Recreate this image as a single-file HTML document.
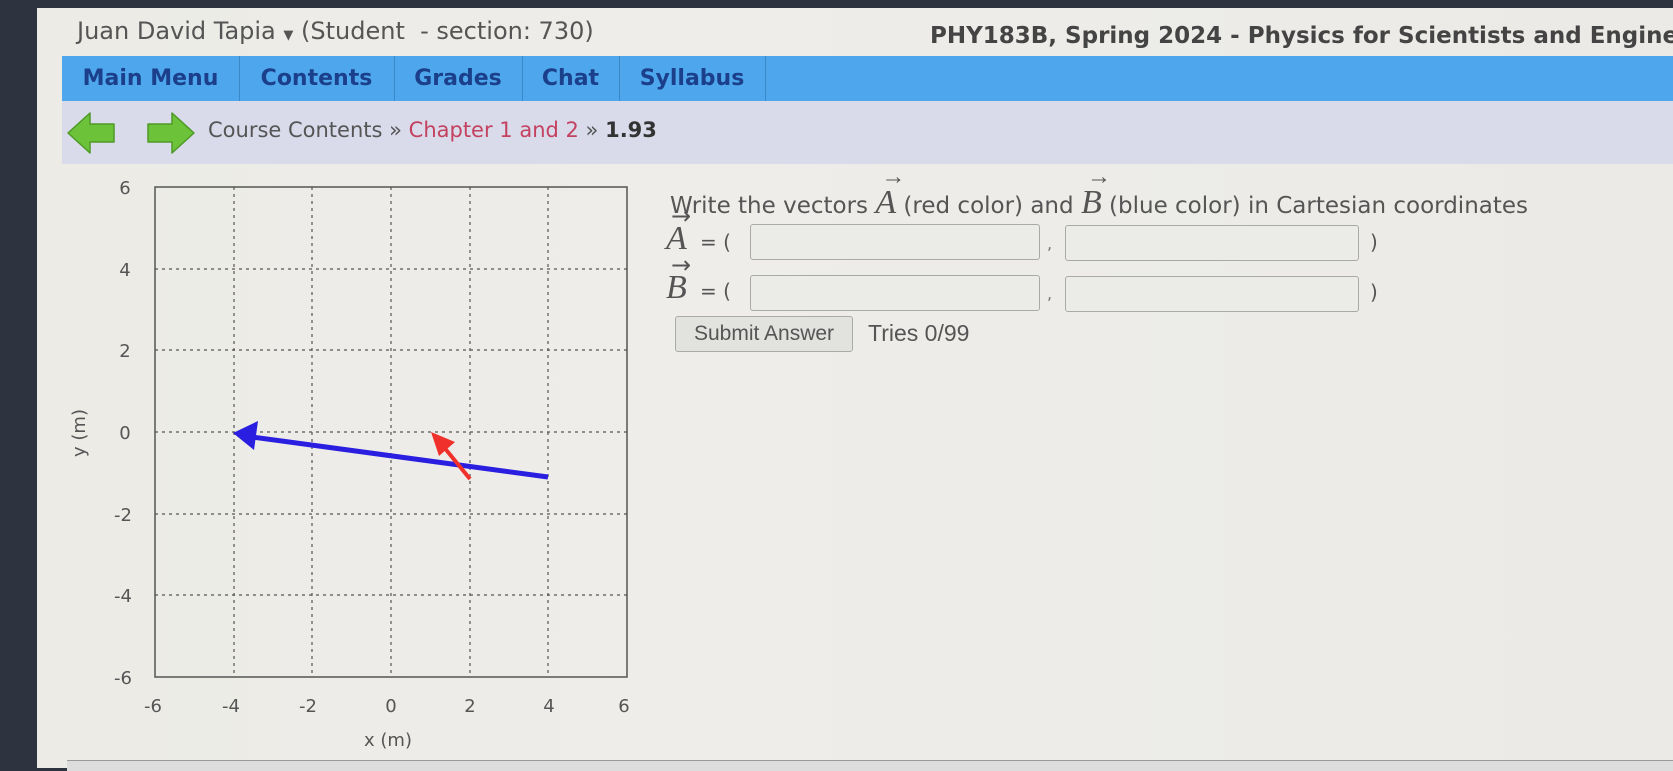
<!DOCTYPE html>
<html><head><meta charset="utf-8"><style>
body{margin:0;width:1673px;height:766px;overflow:hidden;background:#2d3440;font-family:"DejaVu Sans","Liberation Sans",sans-serif;position:relative}
#page{position:absolute;left:37px;top:8px;width:1640px;height:760px;background:linear-gradient(90deg,#ecebe6 0%,#eeedea 40%,#ebeae6 100%)}
.a{position:absolute;white-space:nowrap}
.nav{position:absolute;left:25px;top:48px;width:1620px;height:45px;background:#4ea7ec}
.tab{position:absolute;top:0;height:45px;border-right:1px solid #3a88c8;color:#1b3f8a;font-weight:bold;font-size:22px;line-height:45px;text-align:center}
.crumb{position:absolute;left:25px;top:93px;width:1620px;height:63px;background:#d9dbeb}
.inp{position:absolute;height:34px;border:1px solid #a9a9a9;border-radius:3px;background:#ebebe8}
.m{font-family:"Liberation Serif",serif;font-style:italic;font-size:34px;color:#555}
.ar{position:absolute;left:6px;top:-20px;font-size:24px;font-style:normal}
</style></head><body>
<div id="page">
<div class="a" style="left:40px;top:9px;font-size:24px;color:#555">Juan David Tapia <span style="font-size:13px">▼</span> (Student &nbsp;- section: 730)</div>
<div class="a" style="left:893px;top:15px;font-size:23px;font-weight:bold;color:#444">PHY183B, Spring 2024 - Physics for Scientists and Engineers</div>
<div class="nav">
<div class="tab" style="left:0;width:177px">Main Menu</div>
<div class="tab" style="left:177px;width:155px">Contents</div>
<div class="tab" style="left:332px;width:128px">Grades</div>
<div class="tab" style="left:460px;width:97px">Chat</div>
<div class="tab" style="left:557px;width:146px">Syllabus</div>
</div>
<div class="crumb">
<svg style="position:absolute;left:4px;top:10px" width="50" height="44" viewBox="0 0 50 44"><path d="M2 22 L24 2 L24 13 L48 13 L48 31 L24 31 L24 42 Z" fill="#6cc33a" stroke="#4e9a26" stroke-width="1.5" stroke-linejoin="round"/></svg>
<svg style="position:absolute;left:84px;top:10px" width="50" height="44" viewBox="0 0 50 44"><path d="M48 22 L26 2 L26 13 L2 13 L2 31 L26 31 L26 42 Z" fill="#6cc33a" stroke="#4e9a26" stroke-width="1.5" stroke-linejoin="round"/></svg>
<div class="a" style="left:146px;top:17px;font-size:21px;color:#555">Course Contents » <span style="color:#c4415f">Chapter 1 and 2</span> » <b style="color:#333">1.93</b></div>
</div>
<svg class="a" style="left:0;top:0" width="620" height="760">
<g stroke="#555" stroke-width="1.2" stroke-dasharray="3,4" fill="none">
<line x1="197" y1="179" x2="197" y2="669"/><line x1="275" y1="179" x2="275" y2="669"/><line x1="354" y1="179" x2="354" y2="669"/><line x1="433" y1="179" x2="433" y2="669"/><line x1="511" y1="179" x2="511" y2="669"/>
<line x1="118" y1="261" x2="590" y2="261"/><line x1="118" y1="342" x2="590" y2="342"/><line x1="118" y1="424" x2="590" y2="424"/><line x1="118" y1="506" x2="590" y2="506"/><line x1="118" y1="587" x2="590" y2="587"/>
</g>
<rect x="118" y="179" width="472" height="490" fill="none" stroke="#555" stroke-width="1.5"/>
<g font-size="18" fill="#555" text-anchor="middle" font-family="DejaVu Sans,sans-serif">
<text x="88" y="186">6</text><text x="88" y="268">4</text><text x="88" y="349">2</text><text x="88" y="431">0</text><text x="86" y="513">-2</text><text x="86" y="594">-4</text><text x="86" y="676">-6</text>
<text x="116" y="704">-6</text><text x="194" y="704">-4</text><text x="271" y="704">-2</text><text x="354" y="704">0</text><text x="433" y="704">2</text><text x="512" y="704">4</text><text x="587" y="704">6</text>
<text x="351" y="738">x (m)</text>
<text transform="translate(48,425) rotate(-90)">y (m)</text>
</g>
<line x1="511" y1="469" x2="215" y2="429" stroke="#2a1fe0" stroke-width="5"/>
<path d="M196 425 L221 413 L217 442 Z" fill="#2a1fe0"/>
<line x1="433" y1="471" x2="406" y2="438" stroke="#f0302a" stroke-width="4"/>
<path d="M394 424 L418 434 L402 448 Z" fill="#f0302a"/>
</svg>
<div class="a" style="left:633px;top:176px;font-size:23px;color:#555">Write the vectors <span class="m" style="position:relative">A<span class="ar">→</span></span> (red color) and <span class="m" style="position:relative">B<span class="ar">→</span></span> (blue color) in Cartesian coordinates</div>
<div class="a m" style="left:629px;top:212px">A</div><div class="a" style="left:634px;top:194px;font-size:24px;color:#555">→</div>
<div class="a" style="left:663px;top:222px;font-size:20px;color:#555">= (</div>
<div class="inp" style="left:713px;top:216px;width:288px"></div>
<div class="a" style="left:1010px;top:226px;font-size:16px;color:#777">,</div>
<div class="inp" style="left:1028px;top:217px;width:292px"></div>
<div class="a" style="left:1333px;top:222px;font-size:20px;color:#555">)</div>
<div class="a m" style="left:629px;top:261px">B</div><div class="a" style="left:634px;top:243px;font-size:24px;color:#555">→</div>
<div class="a" style="left:663px;top:271px;font-size:20px;color:#555">= (</div>
<div class="inp" style="left:713px;top:267px;width:288px"></div>
<div class="a" style="left:1010px;top:276px;font-size:16px;color:#777">,</div>
<div class="inp" style="left:1028px;top:268px;width:292px"></div>
<div class="a" style="left:1333px;top:272px;font-size:20px;color:#555">)</div>
<div class="a" style="left:638px;top:308px;width:176px;height:34px;border:1px solid #aaa;border-radius:3px;background:#e2e2df;font-family:'Liberation Sans',sans-serif;font-size:21px;color:#555;line-height:34px;text-align:center">Submit Answer</div>
<div class="a" style="left:831px;top:312px;font-family:'Liberation Sans',sans-serif;font-size:23px;color:#555">Tries 0/99</div>
<div class="a" style="left:30px;top:752px;width:1620px;height:10px;border-top:1px solid #999;background:#ddd"></div>
</div>
</body></html>
